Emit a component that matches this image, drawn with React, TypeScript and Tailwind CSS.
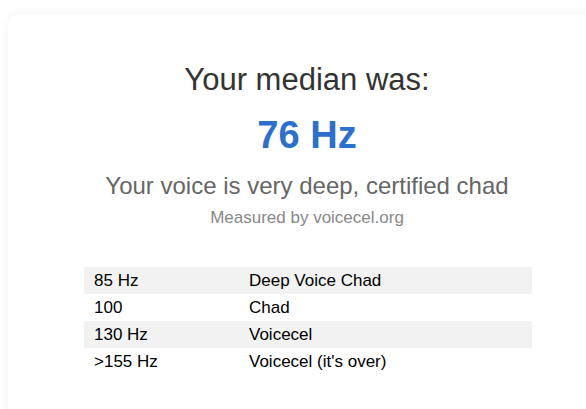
export default function App() {
  const rows = [
    { hz: '85 Hz', label: 'Deep Voice Chad' },
    { hz: '100', label: 'Chad' },
    { hz: '130 Hz', label: 'Voicecel' },
    { hz: '>155 Hz', label: 'Voicecel (it\'s over)' },
  ]

  return (
    <div className="h-[409px] w-[586px] overflow-hidden bg-white font-['Liberation_Sans',Arial,sans-serif]">
      <div className="ml-2 mt-[14px] h-[420px] w-[598px] rounded-xl bg-white pt-[48px] text-center shadow-[0_0_10px_rgba(0,0,0,0.06)]">
        {/* Result */}
        <h1 className="text-[31px] leading-[36px] text-[#333]">Your median was:</h1>
        <p className="mt-[15px] text-[38px] font-bold leading-[44px] text-[#2d6fcd]">76 Hz</p>
        <p className="mt-[15px] text-[24px] leading-[28px] text-[#666]">Your voice is very deep, certified chad</p>
        <p className="mt-[8px] text-[17px] leading-[20px] text-[#888]">Measured by voicecel.org</p>

        {/* Scale */}
        <div className="ml-[76px] mt-[39px] w-[448px] text-left text-[17px] leading-[27px] text-black">
          {rows.map((r, i) => (
            <div key={r.hz} className={`grid grid-cols-[155px_1fr] ${i % 2 === 0 ? 'bg-[#f2f2f2]' : 'bg-white'}`}>
              <div className="px-[10px]">{r.hz}</div>
              <div className="px-[10px]">{r.label}</div>
            </div>
          ))}
        </div>
      </div>
    </div>
  )
}
